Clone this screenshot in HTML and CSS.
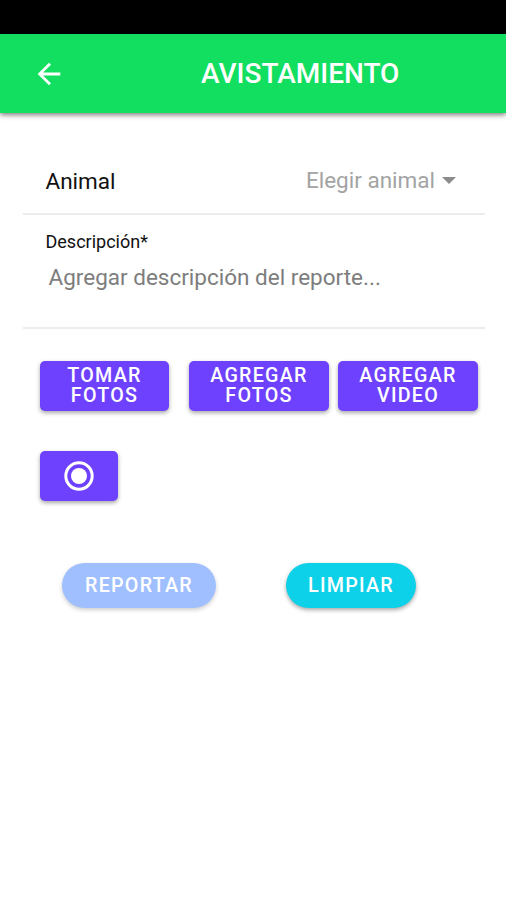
FILE: index.html
```html
<!DOCTYPE html>
<html lang="es">
<head>
    <meta charset="UTF-8">
    <meta name="viewport" content="width=device-width, initial-scale=1.0">
    <title>Avistamiento</title>
    <link rel="stylesheet" href="styles.css">
</head>
<body>
    <div class="status-bar"></div>

    <header class="toolbar">
        <button type="button" class="back-btn" aria-label="Volver">
            <svg viewBox="0 0 24 24" width="34" height="34">
                <path d="M20 11H7.83l5.59-5.59L12 4l-8 8 8 8 1.41-1.41L7.83 13H20v-2z" fill="currentColor"/>
            </svg>
        </button>
        <h1>AVISTAMIENTO</h1>
    </header>

    <main>
        <form class="report-form">
            <div class="item item-select">
                <span class="item-label">Animal</span>
                <span class="select-text">Elegir animal</span>
                <span class="select-arrow"></span>
            </div>

            <div class="item item-textarea">
                <label for="descripcion">Descripción*</label>
                <textarea id="descripcion" name="descripcion" placeholder="Agregar descripción del reporte..."></textarea>
            </div>

            <div class="media-buttons">
                <button type="button" class="btn btn-take">TOMAR<br>FOTOS</button>
                <button type="button" class="btn btn-add">AGREGAR<br>FOTOS</button>
                <button type="button" class="btn btn-add">AGREGAR<br>VIDEO</button>
            </div>

            <button type="button" class="btn btn-record" aria-label="Grabar">
                <svg viewBox="0 0 30 30" width="30" height="30">
                    <circle cx="15" cy="15" r="13.2" fill="none" stroke="currentColor" stroke-width="3"/>
                    <circle cx="15" cy="15" r="8" fill="currentColor"/>
                </svg>
            </button>

            <div class="form-actions">
                <button type="button" class="btn btn-round btn-report">REPORTAR</button>
                <button type="button" class="btn btn-round btn-clear">LIMPIAR</button>
            </div>
        </form>
    </main>
</body>
</html>
```
FILE: styles.css
```css
* {
    box-sizing: border-box;
    margin: 0;
    padding: 0;
    font-family: Roboto, "Liberation Sans", sans-serif;
}

body {
    min-height: 100vh;
    background-color: #fff;
    color: #111;
}

.status-bar {
    height: 34px;
    background-color: #000;
}

.toolbar {
    display: flex;
    align-items: center;
    height: 79px;
    padding-left: 32px;
    background-color: #12de5f;
    color: #fff;
    box-shadow: 0 2px 5px rgba(0, 0, 0, 0.5);
}

.back-btn {
    display: flex;
    width: 34px;
    height: 34px;
    border: none;
    background: none;
    color: #fff;
}

.toolbar h1 {
    margin-left: 135px;
    font-size: 28px;
    font-weight: 500;
    line-height: 34px;
}

.report-form {
    padding: 34px 21px 20px 23px;
}

.item {
    border-bottom: 2px solid #ececec;
}

.item-select {
    display: flex;
    align-items: center;
    height: 68px;
    padding: 0 29px 0 22.5px;
    font-size: 22.5px;
}

.item-label {
    flex: 1;
    padding-top: 1px;
}

.select-text {
    color: #a3a3a3;
}

.select-arrow {
    margin-left: 7px;
    border-top: 7px solid #8c8c8c;
    border-left: 7px solid transparent;
    border-right: 7px solid transparent;
}

.item-textarea {
    height: 114px;
    padding: 16px 22.5px 0;
}

.item-textarea label {
    display: block;
    font-size: 18px;
    line-height: 22px;
}

.item-textarea textarea {
    display: block;
    width: 100%;
    height: 56px;
    padding: 10px 3px 0;
    border: none;
    outline: none;
    resize: none;
    overflow: hidden;
    background: none;
    font-size: 22.5px;
    line-height: 28px;
}

.item-textarea textarea::placeholder {
    color: #7d7d7d;
}

.btn {
    height: 50px;
    border: none;
    border-radius: 5px;
    background-color: #6e41ff;
    color: #fff;
    font-size: 19.7px;
    font-weight: 500;
    line-height: 19.7px;
    letter-spacing: 1.25px;
    box-shadow: 0 2px 4px rgba(0, 0, 0, 0.35);
}

.media-buttons {
    display: flex;
    margin: 32px 0 0 17px;
}

.btn-take {
    width: 129px;
    margin-right: 20px;
}

.btn-add {
    width: 140px;
    margin-right: 9px;
}

.btn-add:last-child {
    margin-right: 0;
}

.btn-record {
    display: flex;
    align-items: center;
    justify-content: center;
    width: 78px;
    margin: 40px 0 0 17px;
}

.form-actions {
    display: flex;
    gap: 70px;
    margin: 62px 0 0 39px;
}

.btn-round {
    height: 45px;
    border-radius: 23px;
}

.btn-report {
    width: 154px;
    background-color: #a0bfff;
    box-shadow: 0 2px 4px rgba(0, 0, 0, 0.2);
}

.btn-clear {
    width: 130px;
    background-color: #0dd1e8;
}
```
